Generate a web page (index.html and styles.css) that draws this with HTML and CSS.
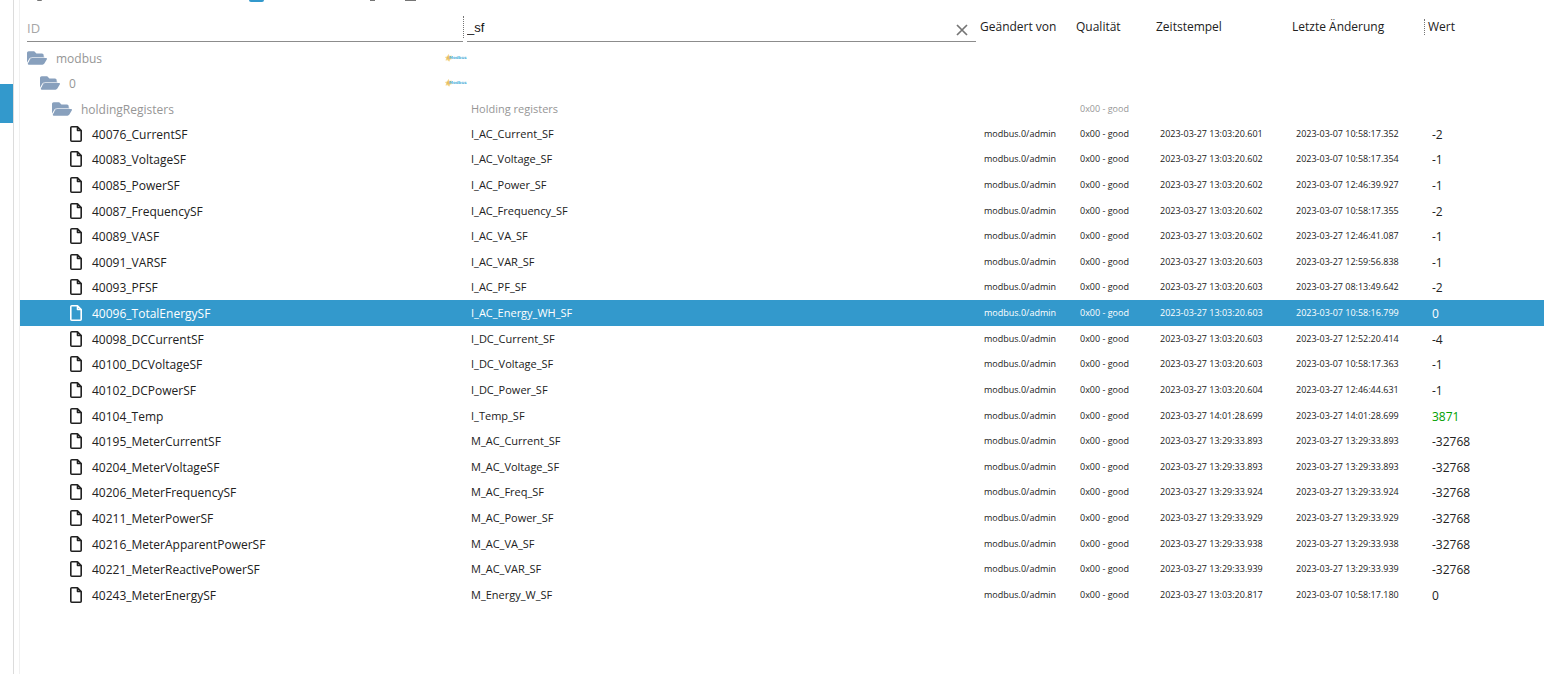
FILE: index.html
```
<!DOCTYPE html>
<html lang="de">
<head>
<meta charset="utf-8">
<title>Objekte</title>
<link rel="stylesheet" href="styles.css">
</head>
<body>
<div class="app">
  <nav class="side"><button class="side-item" aria-label="Objekte"></button></nav>
  <main class="panel">
    <div class="toolbar">
      <span class="tool gray"></span><span class="tool blue"></span><span class="tool mid"></span><span class="tool last"></span>
    </div>
    <table class="objects">
      <colgroup><col class="c-id"><col><col class="c-by"><col class="c-quality"><col class="c-time"><col class="c-time"><col class="c-value"></colgroup>
      <thead>
        <tr>
          <th><div class="id-head"><div class="filter"><input class="id-filter" placeholder="ID" aria-label="ID"></div><span class="grip"></span></div></th>
          <th><div class="filter wide"><input class="name-filter" value="_sf" aria-label="Name"><button class="clear" aria-label="Filter leeren"><svg viewBox="0 0 12 12"><path d="M1 1l10 10M11 1L1 11" stroke="#757575" stroke-width="1.700" fill="none"/></svg></button></div></th>
          <th>Geändert von</th><th>Qualität</th><th>Zeitstempel</th><th>Letzte Änderung</th><th><span class="handle">Wert</span></th>
        </tr>
      </thead>
      <tbody id="rows"></tbody>
    </table>
  </main>
</div>
<script src="rows.js"></script>
</body>
</html>
```
FILE: styles.css
```
* { box-sizing: border-box; }
body { margin: 0; background: #fff; color: #212121; font: 12px/16px "Open Sans", "Noto Sans", sans-serif; }
.app { display: flex; min-height: 100vh; }
.side { flex: 0 0 14px; padding-top: 84px; border-right: 1px solid #dcdcdc; }
.side-item { display: block; width: 13px; height: 39px; padding: 0; border: 0; background: #3399cc; }
.panel { flex: 1; min-width: 0; margin-left: 5px; border-left: 1px solid #f0f0f0; }
.toolbar { display: flex; align-items: flex-start; height: 8px; padding-left: 17px; }
.tool { height: 1px; background: #757575; }
.gray { width: 5px; margin-right: 207px; border-radius: 0 0 2px 2px; }
.blue { width: 15px; height: 2px; margin-right: 106px; background: #3399cc; border-radius: 0 0 2px 2px; }
.mid { width: 5px; margin-right: 30px; }
.last { width: 11px; }
.objects { width: 100%; height: 600px; table-layout: fixed; border-collapse: collapse; }
.c-id { width: 447px; }
.c-by { width: 96px; }
.c-quality { width: 80px; }
.c-time { width: 136px; }
.c-value { width: 116px; }
th, td { padding: 0; text-align: left; white-space: nowrap; font-weight: 400; }
th { height: 36px; vertical-align: top; padding-top: 11px; }
th:nth-child(-n+2) { padding-top: 8px; }
.id-head { display: flex; align-items: flex-start; padding: 0 3px 0 7px; }
.grip { height: 22px; border-left: 1px dotted #757575; }
.filter { display: flex; flex: 1; align-items: center; height: 26px; border-bottom: 1px solid #8c8c8c; }
.filter.wide { margin-right: 4px; }
.filter input { flex: 1; min-width: 0; height: 24px; padding: 0 0 2px; border: 0; outline: 0; background: none; color: #111; }
.id-filter { font: 13px/16px "Open Sans", sans-serif; }
.id-filter::placeholder { color: #a6a6a6; opacity: 1; }
.name-filter { font: 13px/16px "Liberation Sans", Arial, sans-serif; }
.clear { width: 12px; height: 12px; margin: 2px 8px 0 0; padding: 0; border: 0; background: none; }
.clear svg { display: block; width: 12px; height: 12px; }
.handle { display: block; margin: 0 0 0 -4px; padding-left: 3px; border-left: 1px dotted #757575; }
td { line-height: 20px; }
.node { display: flex; align-items: center; gap: 10px; height: 20px; padding-left: 50px; }
.node span { padding-top: 2px; }
.level-0 { padding-left: 7px; gap: 9px; }
.level-1 { padding-left: 20px; gap: 9px; }
.level-2 { padding-left: 32px; gap: 9px; }
.folder { width: 20px; height: 18px; fill: #88a0bd; }
.file { width: 12px; height: 16px; }
.modbus { width: 22px; height: 8px; margin-left: auto; }
.logo-text { font: bold 4px "DejaVu Sans", sans-serif; fill: #58b4dc; }
.name { padding-left: 4px; font-size: 11px; }
.small { padding-left: 4px; font-size: 9px; }
.value { padding: 2px 0 0 4px; }
.group { color: #969696; }
.group td { padding-top: 2px; }
.selected { background: #3399cc; color: #fff; }
.changed { color: #00a000; }
```
FILE: rows.js
```
const folders = [
  ["modbus", "", "", true],
  ["0", "", "", true],
  ["holdingRegisters", "Holding registers", "0x00 - good", false]
];
const a = "2023-03-27 ", b = "2023-03-07 ";
const states = [
  ["40076_CurrentSF", "I_AC_Current_SF", a + "13:03:20.601", b + "10:58:17.352", "-2"],
  ["40083_VoltageSF", "I_AC_Voltage_SF", a + "13:03:20.602", b + "10:58:17.354", "-1"],
  ["40085_PowerSF", "I_AC_Power_SF", a + "13:03:20.602", b + "12:46:39.927", "-1"],
  ["40087_FrequencySF", "I_AC_Frequency_SF", a + "13:03:20.602", b + "10:58:17.355", "-2"],
  ["40089_VASF", "I_AC_VA_SF", a + "13:03:20.602", a + "12:46:41.087", "-1"],
  ["40091_VARSF", "I_AC_VAR_SF", a + "13:03:20.603", a + "12:59:56.838", "-1"],
  ["40093_PFSF", "I_AC_PF_SF", a + "13:03:20.603", a + "08:13:49.642", "-2"],
  ["40096_TotalEnergySF", "I_AC_Energy_WH_SF", a + "13:03:20.603", b + "10:58:16.799", "0"],
  ["40098_DCCurrentSF", "I_DC_Current_SF", a + "13:03:20.603", a + "12:52:20.414", "-4"],
  ["40100_DCVoltageSF", "I_DC_Voltage_SF", a + "13:03:20.603", b + "10:58:17.363", "-1"],
  ["40102_DCPowerSF", "I_DC_Power_SF", a + "13:03:20.604", a + "12:46:44.631", "-1"],
  ["40104_Temp", "I_Temp_SF", a + "14:01:28.699", a + "14:01:28.699", "3871"],
  ["40195_MeterCurrentSF", "M_AC_Current_SF", a + "13:29:33.893", a + "13:29:33.893", "-32768"],
  ["40204_MeterVoltageSF", "M_AC_Voltage_SF", a + "13:29:33.893", a + "13:29:33.893", "-32768"],
  ["40206_MeterFrequencySF", "M_AC_Freq_SF", a + "13:29:33.924", a + "13:29:33.924", "-32768"],
  ["40211_MeterPowerSF", "M_AC_Power_SF", a + "13:29:33.929", a + "13:29:33.929", "-32768"],
  ["40216_MeterApparentPowerSF", "M_AC_VA_SF", a + "13:29:33.938", a + "13:29:33.938", "-32768"],
  ["40221_MeterReactivePowerSF", "M_AC_VAR_SF", a + "13:29:33.939", a + "13:29:33.939", "-32768"],
  ["40243_MeterEnergySF", "M_Energy_W_SF", a + "13:03:20.817", b + "10:58:17.180", "0"]
];
const folderIcon = `<svg class="folder" viewBox="0 0 576 512"><path opacity=".5" d="M45 415L85 265Q105 215 152 215H500V250H152Q115 260 100 290z"/><path d="M572.694 292.093L500.270 416.248A63.997 63.997 0 0 1 444.989 448H45.025c-18.523 0-30.064-20.093-20.731-36.093l72.424-124.155A64 64 0 0 1 152 256h399.964c18.523 0 30.064 20.093 20.730 36.093zM152 224h328v-48c0-26.510-21.490-48-48-48H272l-64-64H48C21.490 64 0 85.490 0 112v278.046l69.077-118.418C86.214 242.250 117.989 224 152 224z"/></svg>`;
const fileIcon = `<svg class="file" viewBox="0 0 12 16"><path fill="none" stroke="currentColor" stroke-width="1.600" stroke-linejoin="round" d="M1.800.8H7.500l3.700 3.700v9.700q0 1-1 1H1.800q-1 0-1-1V1.800q0-1 1-1zM7.500.8v3.700h3.700"/></svg>`;
const logoIcon = `<svg class="modbus" viewBox="0 0 22 8"><path fill="#f3d488" d="M3.500 0l1 2 2.200-.6-.5 2 1 1.600-2 .4-1 2.400-1.500-1.600-2.200.4.600-2L0 3l2-.6z"/><circle cx="3.500" cy="3.800" r="1.600" fill="#e9bf58"/><text class="logo-text" x="4" y="5">Modbus</text></svg>`;
const folderRows = folders.map(([id, name, quality, logo], level) =>
  `<tr class="group"><td><div class="node level-${level}">${folderIcon}<span>${id}</span>${logo ? logoIcon : ""}</div></td><td class="name">${name}</td><td></td><td class="small">${quality}</td><td></td><td></td><td></td></tr>`);
const stateRows = states.map(([id, name, time, change, value]) =>
  `<tr class="${id === "40096_TotalEnergySF" ? "selected" : ""}"><td><div class="node">${fileIcon}<span>${id}</span></div></td><td class="name">${name}</td><td class="small">modbus.0/admin</td><td class="small">0x00 - good</td><td class="small">${time}</td><td class="small">${change}</td><td class="value ${value === "3871" ? "changed" : ""}">${value}</td></tr>`);
document.getElementById("rows").innerHTML = folderRows.concat(stateRows).join("");
```
